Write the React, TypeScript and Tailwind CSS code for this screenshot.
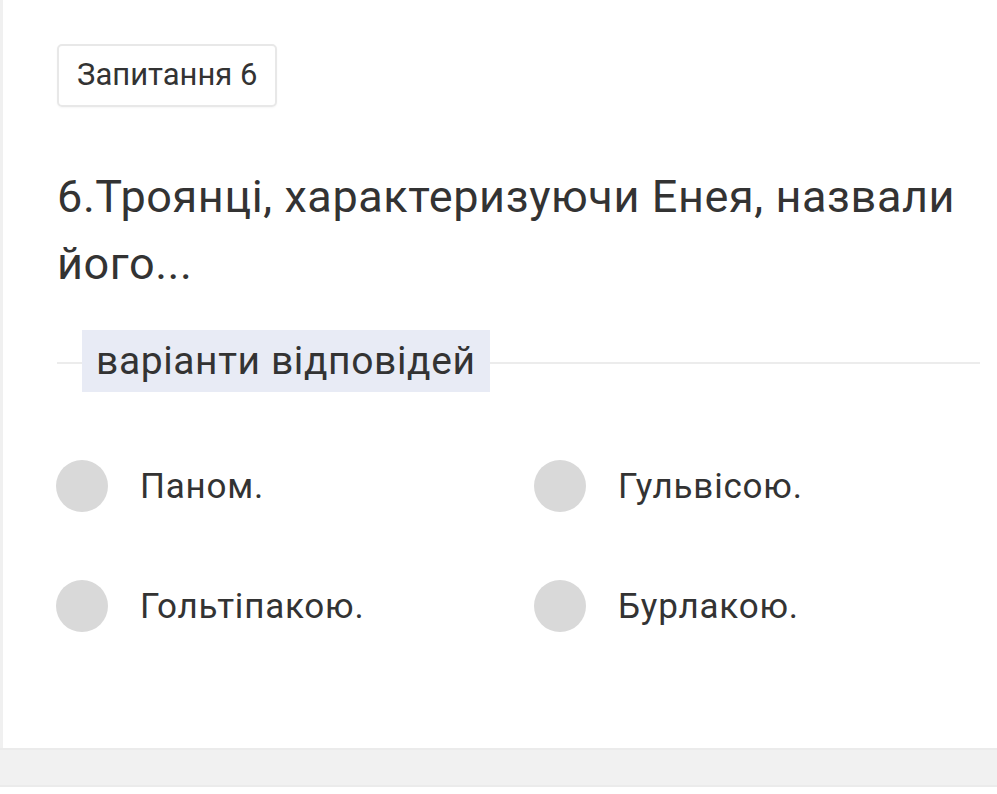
import React from "react";

const options = [
    "Паном.",
    "Гульвісою.",
    "Гольтіпакою.",
    "Бурлакою.",
];

const Option = ({label}: { label: string }) => (
    <div className="flex flex-row items-center h-[52px]">
        <div className="w-[52px] h-[52px] rounded-full bg-[#d9d9d9] shrink-0"/>
        <div className="ml-[32px] text-[35px] tracking-[0.8px] text-[#333333] leading-none">{label}</div>
    </div>
);

export default function App() {
    return (
        <div className="w-[997px] h-[794px] bg-white overflow-hidden" style={{fontFamily: "Roboto, 'Noto Sans', sans-serif"}}>
            <div className="flex flex-col h-[748px] border-l-[3px] border-[#f0f0f0]">
                <div className="pl-[54px] pt-[44px]">
                    <div
                        className="inline-flex items-center h-[63px] px-[18px] border-2 border-[#e8e8e8] rounded-[5px] text-[31px] text-[#333333] shadow-[0_1px_2px_rgba(0,0,0,0.04)]">
                        Запитання 6
                    </div>
                </div>
                <div className="pl-[54px] pr-[20px] mt-[56px] text-[45px] tracking-[0.6px] leading-[67px] text-[#333333]">
                    6.Троянці, характеризуючи Енея, назвали його...
                </div>
                <div className="relative flex flex-row items-center ml-[54px] mr-[17px] mt-[33px] h-[62px]">
                    <div className="absolute left-0 right-0 top-[32px] h-[2px] bg-[#ececec]"/>
                    <div className="relative ml-[25px] h-[62px] px-[14px] flex items-center bg-[#e8ebf5] text-[39px] tracking-[0.6px] text-[#333333]">
                        варіанти відповідей
                    </div>
                </div>
                <div className="grid grid-cols-[478px_1fr] gap-y-[68px] pl-[53px] mt-[68px] w-[960px]">
                    {options.map((o) => (
                        <Option key={o} label={o}/>
                    ))}
                </div>
            </div>
            <div className="h-[39px] bg-[#f1f1f1] border-t-2 border-b-2 border-[#ebebeb]"/>
        </div>
    );
}
